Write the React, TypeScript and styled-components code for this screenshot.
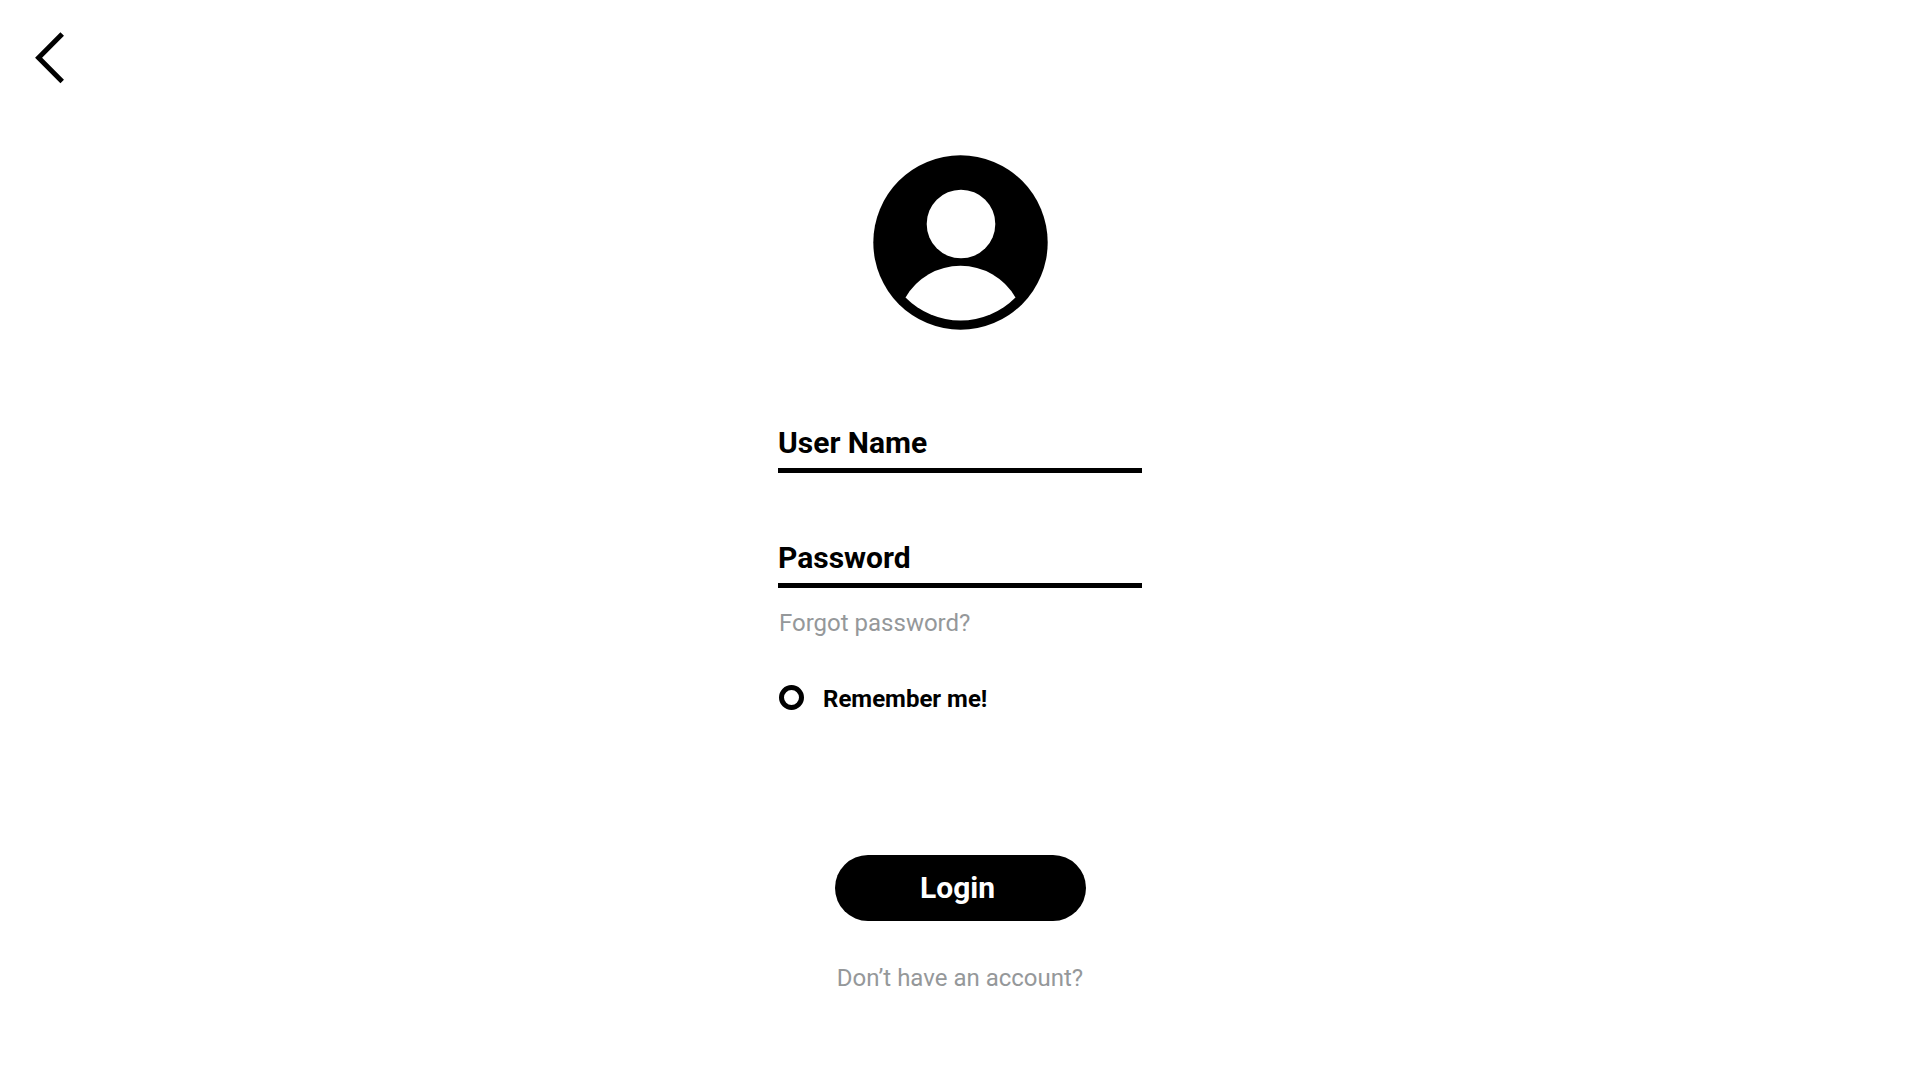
import React from "react";
import styled, { createGlobalStyle } from "styled-components";

const GlobalStyle = createGlobalStyle`
  *, *::before, *::after { box-sizing: border-box; }
  body {
    margin: 0;
    background: #fff;
    color: #000;
    font-family: Roboto, "Liberation Sans", sans-serif;
  }
`;

const Page = styled.div`
  min-height: 100vh;
  display: flex;
  flex-direction: column;
`;

const Header = styled.header`
  display: flex;
  padding: 28px 30px 0;
`;

const BackButton = styled.button`
  display: flex;
  padding: 0;
  border: 0;
  background: none;
  color: inherit;
  cursor: pointer;
`;

const Main = styled.main`
  display: flex;
  flex-direction: column;
  align-items: center;
  padding: 67px 24px 64px;
`;

const Form = styled.form`
  width: 100%;
  max-width: 364px;
  display: flex;
  flex-direction: column;
  align-items: flex-start;
  margin-top: 95px;
`;

const Fields = styled.div`
  width: 100%;
  display: flex;
  flex-direction: column;
  gap: 67px;
`;

const Field = styled.input`
  width: 100%;
  height: 48px;
  padding: 0 0 8px;
  border: 0;
  border-bottom: 5px solid #000;
  border-radius: 0;
  outline: 0;
  background: none;
  color: #000;
  font: 700 30px/35px Roboto, "Liberation Sans", sans-serif;

  &::placeholder {
    color: #000;
    opacity: 1;
  }
`;

const MutedLink = styled.a`
  color: #95989a;
  font-size: 24px;
  line-height: 30px;
  text-decoration: none;
`;

const ForgotLink = styled(MutedLink)`
  margin-top: 20px;
  padding-left: 1px;
`;

const Remember = styled.label`
  display: flex;
  align-items: flex-start;
  gap: 19px;
  margin-top: 47px;
  padding-left: 1px;
  font-size: 24px;
  font-weight: 700;
  line-height: 28px;
  cursor: pointer;
`;

const RoundCheckbox = styled.input`
  appearance: none;
  width: 25px;
  height: 25px;
  margin: 0;
  border: 5px solid #000;
  border-radius: 50%;
  background: #fff;

  &:checked {
    background: #000;
    box-shadow: inset 0 0 0 3px #fff;
  }
`;

const LoginButton = styled.button`
  align-self: center;
  width: 251px;
  height: 66px;
  margin-top: 142px;
  padding: 0 5px 2px 0;
  border: 0;
  border-radius: 33px;
  background: #000;
  color: #fff;
  font: 700 30px/35px Roboto, "Liberation Sans", sans-serif;
  cursor: pointer;
`;

const SignUpLink = styled(MutedLink)`
  align-self: center;
  margin-top: 42px;
`;

const Chevron = () => (
  <svg width="38" height="60" viewBox="0 0 38 60" fill="none" aria-hidden="true">
    <path d="M32.2 6 L8.6 29.7 L32.2 53.4" stroke="currentColor" strokeWidth="5" />
  </svg>
);

const Avatar = () => (
  <svg width="175" height="175" viewBox="0 0 175 175" role="img" aria-label="User">
    <circle cx="87.5" cy="87.5" r="87.2" fill="#000" />
    <circle cx="88" cy="69" r="34.3" fill="#fff" />
    <path d="M32.5 142.6 A63.5 63.5 0 0 1 142.5 142.6 A77.5 77.5 0 0 1 32.5 142.6 Z" fill="#fff" />
  </svg>
);

export default function App() {
  return (
    <Page>
      <GlobalStyle />
      <Header>
        <BackButton type="button" aria-label="Back">
          <Chevron />
        </BackButton>
      </Header>
      <Main>
        <Avatar />
        <Form onSubmit={(event: React.FormEvent) => event.preventDefault()}>
          <Fields>
            <Field type="text" placeholder="User Name" aria-label="User Name" autoComplete="username" />
            <Field type="password" placeholder="Password" aria-label="Password" autoComplete="current-password" />
          </Fields>
          <ForgotLink href="#forgot">Forgot password?</ForgotLink>
          <Remember htmlFor="remember">
            <RoundCheckbox id="remember" type="checkbox" />
            Remember me!
          </Remember>
          <LoginButton type="submit">Login</LoginButton>
          <SignUpLink href="#signup">Don’t have an account?</SignUpLink>
        </Form>
      </Main>
    </Page>
  );
}
